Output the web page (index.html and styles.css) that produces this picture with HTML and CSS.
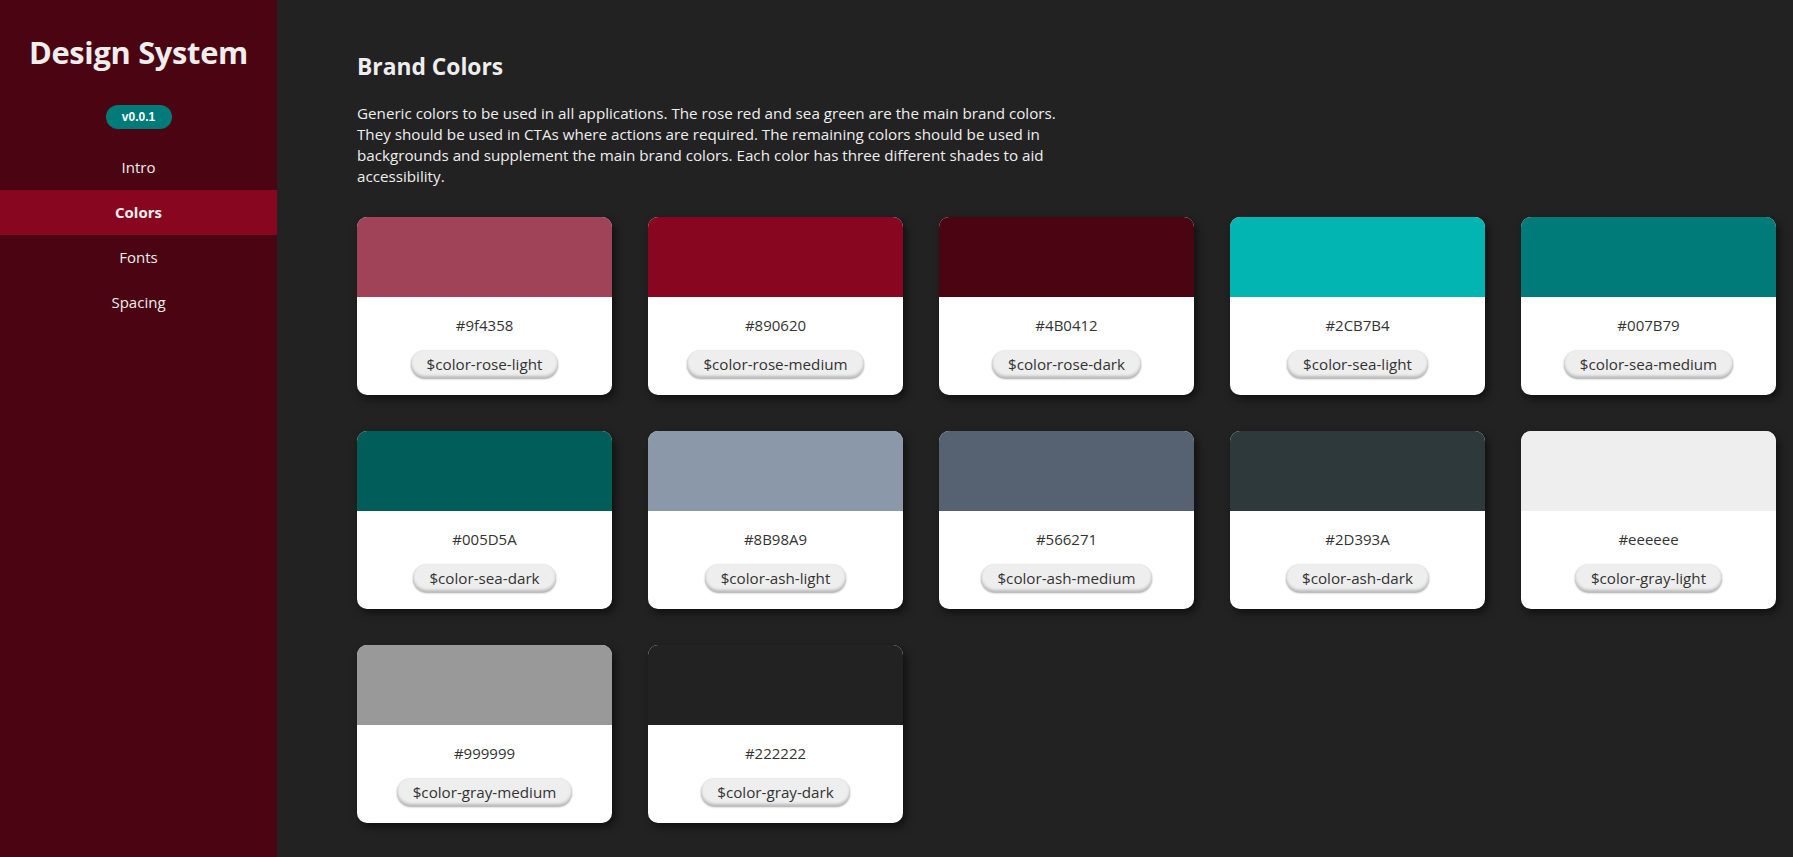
FILE: index.html
```html
<!DOCTYPE html>
<html lang="en">
<head>
<meta charset="utf-8">
<title>Design System - Colors</title>
<link rel="stylesheet" href="styles.css">
</head>
<body>
<aside class="sidebar">
  <h1 class="brand">Design System</h1>
  <span class="version">v0.0.1</span>
  <nav class="nav">
    <a class="nav-item" href="#">Intro</a>
    <a class="nav-item active" href="#">Colors</a>
    <a class="nav-item" href="#">Fonts</a>
    <a class="nav-item" href="#">Spacing</a>
  </nav>
</aside>
<main class="main">
  <h2 class="title">Brand Colors</h2>
  <p class="intro">Generic colors to be used in all applications. The rose red and sea green are the main brand colors. They should be used in CTAs where actions are required. The remaining colors should be used in backgrounds and supplement the main brand colors. Each color has three different shades to aid accessibility.</p>
  <div class="grid">
    <div class="card"><div class="swatch" style="background:#a14358"></div><div class="info"><div class="hex">#9f4358</div><span class="pill">$color-rose-light</span></div></div>
    <div class="card"><div class="swatch" style="background:#890620"></div><div class="info"><div class="hex">#890620</div><span class="pill">$color-rose-medium</span></div></div>
    <div class="card"><div class="swatch" style="background:#4B0412"></div><div class="info"><div class="hex">#4B0412</div><span class="pill">$color-rose-dark</span></div></div>
    <div class="card"><div class="swatch" style="background:#03b5b2"></div><div class="info"><div class="hex">#2CB7B4</div><span class="pill">$color-sea-light</span></div></div>
    <div class="card"><div class="swatch" style="background:#007B79"></div><div class="info"><div class="hex">#007B79</div><span class="pill">$color-sea-medium</span></div></div>
    <div class="card"><div class="swatch" style="background:#005D5A"></div><div class="info"><div class="hex">#005D5A</div><span class="pill">$color-sea-dark</span></div></div>
    <div class="card"><div class="swatch" style="background:#8B98A9"></div><div class="info"><div class="hex">#8B98A9</div><span class="pill">$color-ash-light</span></div></div>
    <div class="card"><div class="swatch" style="background:#566271"></div><div class="info"><div class="hex">#566271</div><span class="pill">$color-ash-medium</span></div></div>
    <div class="card"><div class="swatch" style="background:#2D393A"></div><div class="info"><div class="hex">#2D393A</div><span class="pill">$color-ash-dark</span></div></div>
    <div class="card"><div class="swatch" style="background:#eeeeee"></div><div class="info"><div class="hex">#eeeeee</div><span class="pill">$color-gray-light</span></div></div>
    <div class="card"><div class="swatch" style="background:#999999"></div><div class="info"><div class="hex">#999999</div><span class="pill">$color-gray-medium</span></div></div>
    <div class="card"><div class="swatch" style="background:#222222"></div><div class="info"><div class="hex">#222222</div><span class="pill">$color-gray-dark</span></div></div>
  </div>
</main>
</body>
</html>
```
FILE: styles.css
```css
* { box-sizing: border-box; }
html, body { margin: 0; height: 100%; }
body {
  display: flex;
  background: #222222;
  font-family: "Open Sans", "Noto Sans", sans-serif;
  color: #eeeeee;
  overflow: hidden;
}
.sidebar {
  width: 277px;
  flex: 0 0 277px;
  min-height: 857px;
  background: #4B0412;
  display: flex;
  flex-direction: column;
  align-items: center;
}
.brand {
  margin: 30px 0 0;
  font-size: 30.8px;
  line-height: 44px;
  font-weight: 700;
  color: #eeeeee;
  letter-spacing: -0.3px;
}
.version {
  margin-top: 31px;
  width: 66px;
  height: 24px;
  border-radius: 12px;
  background: #007B79;
  color: #fff;
  font-family: "Liberation Sans", Arial, sans-serif;
  font-weight: 700;
  font-size: 12px;
  line-height: 24px;
  text-align: center;
}
.nav {
  margin-top: 16px;
  width: 100%;
  display: flex;
  flex-direction: column;
}
.nav-item {
  display: block;
  height: 45px;
  line-height: 45px;
  text-align: center;
  color: #eeeeee;
  text-decoration: none;
  font-size: 15px;
}
.nav-item.active {
  background: #890620;
  font-weight: 700;
}
.main {
  flex: 1;
  padding: 50px 17px 30px 80px;
}
.title {
  margin: 0;
  font-size: 22.8px;
  line-height: 34px;
  font-weight: 700;
  color: #eeeeee;
}
.intro {
  margin: 19px 0 30px;
  max-width: 722px;
  font-size: 15.2px;
  line-height: 21px;
  color: #eeeeee;
}
.grid {
  display: flex;
  flex-wrap: wrap;
  gap: 36px;
}
.card {
  width: 255px;
  height: 178px;
  background: #fff;
  border-radius: 10px;
  overflow: hidden;
  box-shadow: 3px 4px 8px rgba(0, 0, 0, 0.55);
  display: flex;
  flex-direction: column;
}
.swatch {
  height: 80px;
  flex: 0 0 80px;
}
.info {
  display: flex;
  flex-direction: column;
  align-items: center;
  padding-top: 18px;
}
.hex {
  height: 20px;
  line-height: 20px;
  font-size: 15px;
  color: #333333;
}
.pill {
  margin-top: 15px;
  height: 28px;
  line-height: 28px;
  padding: 0 16px;
  border-radius: 14px;
  background: #eeeeee;
  color: #333333;
  font-size: 15.2px;
  box-shadow: inset 0 -2px 3px rgba(0, 0, 0, 0.22), 0 1px 2px rgba(0, 0, 0, 0.35);
}
```
